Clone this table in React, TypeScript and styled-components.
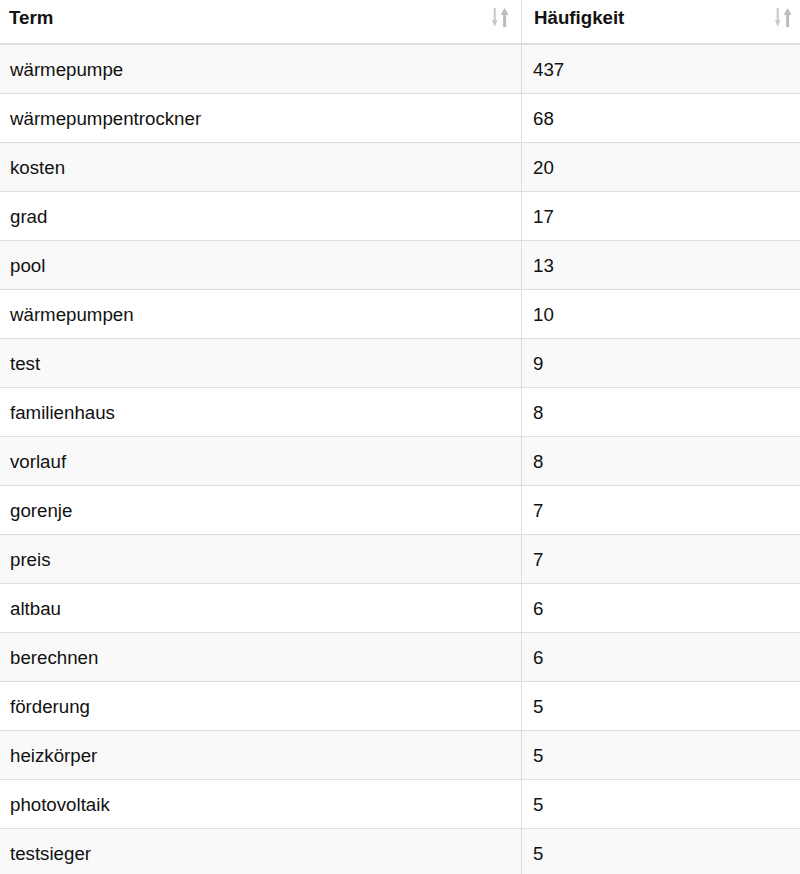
import React from "react";
import styled, { createGlobalStyle } from "styled-components";

const GlobalStyle = createGlobalStyle`
  html, body {
    margin: 0;
    padding: 0;
    background: #ffffff;
    overflow: hidden;
  }
  body {
    font-family: "Liberation Sans", Arial, Helvetica, sans-serif;
    color: #111111;
  }
`;

const Table = styled.div`
  width: 804px;
  display: flex;
  flex-direction: column;
  font-size: 18.7px;
`;

const Row = styled.div<{ $striped?: boolean }>`
  display: grid;
  grid-template-columns: 521px 283px;
  background: ${(p) => (p.$striped ? "#f9f9f9" : "#ffffff")};
  border-bottom: 1px solid #dddddd;
`;

const HeadRow = styled(Row)`
  border-bottom: 2px solid #dddddd;
`;

const Cell = styled.div<{ $divider?: boolean }>`
  padding: 14px 10px 12px ${(p) => (p.$divider ? "11px" : "10px")};
  line-height: 22px;
  height: 22px;
  white-space: nowrap;
  border-left: ${(p) => (p.$divider ? "1px solid #dddddd" : "none")};
`;

const HeadCell = styled(Cell)`
  display: flex;
  justify-content: space-between;
  align-items: flex-start;
  padding: 7px 12px 14px ${(p) => (p.$divider ? "12px" : "9px")};
  font-weight: bold;
`;

const SortIcon = styled.svg`
  display: block;
  width: 17px;
  height: 19px;
  margin-top: 1px;
  flex-shrink: 0;
`;

const SortBoth = () => (
  <SortIcon viewBox="0 0 17 19">
    <g fill="#c8c8c8">
      <rect x="1.7" y="0" width="2" height="13" />
      <polygon points="0,12 5.4,12 2.7,19" />
    </g>
    <g fill="#bcbcbc">
      <polygon points="8.6,7 16.6,7 12.6,0" />
      <rect x="11.1" y="6" width="3" height="13" />
    </g>
  </SortIcon>
);

const rows: [string, number][] = [
  ["wärmepumpe", 437],
  ["wärmepumpentrockner", 68],
  ["kosten", 20],
  ["grad", 17],
  ["pool", 13],
  ["wärmepumpen", 10],
  ["test", 9],
  ["familienhaus", 8],
  ["vorlauf", 8],
  ["gorenje", 7],
  ["preis", 7],
  ["altbau", 6],
  ["berechnen", 6],
  ["förderung", 5],
  ["heizkörper", 5],
  ["photovoltaik", 5],
  ["testsieger", 5],
];

export default function App() {
  return (
    <>
      <GlobalStyle />
      <Table>
        <HeadRow>
          <HeadCell>
            <span>Term</span>
            <SortBoth />
          </HeadCell>
          <HeadCell $divider>
            <span>Häufigkeit</span>
            <SortBoth />
          </HeadCell>
        </HeadRow>
        {rows.map(([term, count], i) => (
          <Row key={term} $striped={i % 2 === 0}>
            <Cell>{term}</Cell>
            <Cell $divider>{count}</Cell>
          </Row>
        ))}
      </Table>
    </>
  );
}
